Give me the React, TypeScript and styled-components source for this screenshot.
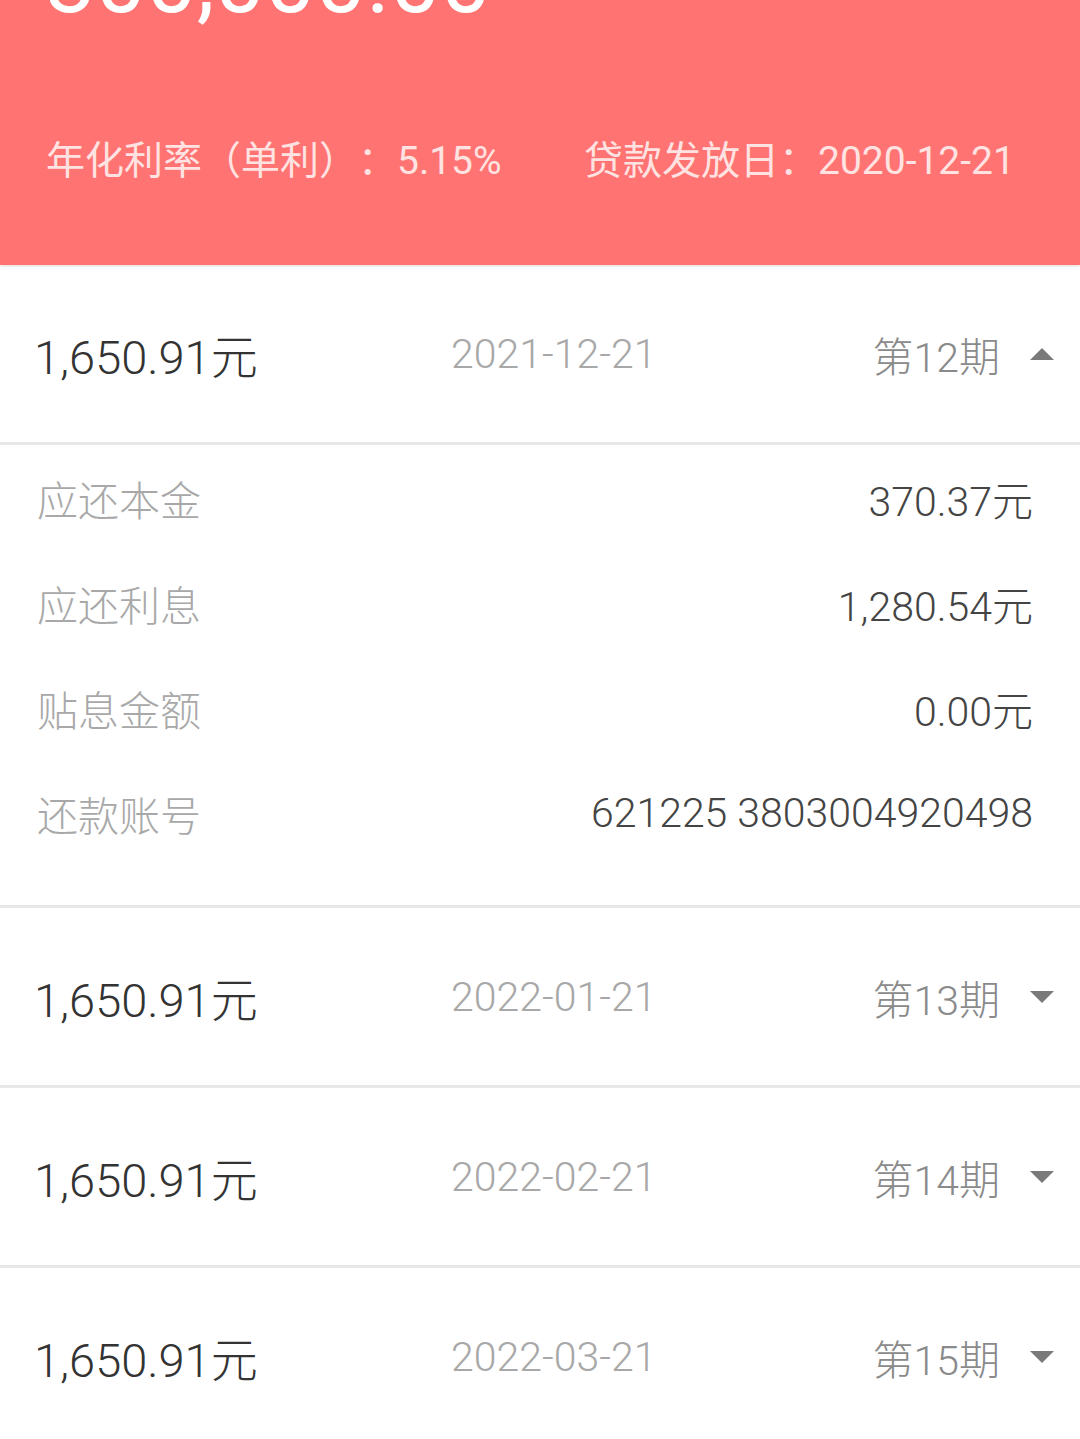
import styled, { createGlobalStyle } from "styled-components";

const GlobalStyle = createGlobalStyle`
  html, body {
    margin: 0;
    padding: 0;
    overflow: hidden;
    background: #ffffff;
  }
  body {
    font-family: Roboto, "Noto Sans CJK SC", sans-serif;
    -webkit-font-smoothing: antialiased;
    text-spacing-trim: space-all;
  }
`;

interface Installment {
  amount: string;
  date: string;
  period: number;
  open?: boolean;
}

const installments: Installment[] = [
  { amount: "1,650.91元", date: "2021-12-21", period: 12, open: true },
  { amount: "1,650.91元", date: "2022-01-21", period: 13 },
  { amount: "1,650.91元", date: "2022-02-21", period: 14 },
  { amount: "1,650.91元", date: "2022-03-21", period: 15 },
];

const details = [
  { label: "应还本金", value: "370.37元" },
  { label: "应还利息", value: "1,280.54元" },
  { label: "贴息金额", value: "0.00元" },
  { label: "还款账号", value: "621225 3803004920498" },
];

const Caret = ({ up }: { up?: boolean }) => (
  <CaretIcon width="24" height="12" viewBox="0 0 24 12">
    {up ? (
      <polygon points="12,0 24,12 0,12" fill="#7a7a7a" />
    ) : (
      <polygon points="0,0 24,0 12,12" fill="#7a7a7a" />
    )}
  </CaretIcon>
);

const App = () => (
  <Page>
    <GlobalStyle />
    <Header>
      <BigAmount>300,000.00</BigAmount>
      <InfoRow>
        <InfoText>年化利率（单利）：5.15%</InfoText>
        <InfoText>贷款发放日：2020-12-21</InfoText>
      </InfoRow>
    </Header>
    <List>
      {installments.map((item) => (
        <Item key={item.period}>
          <Summary>
            <Amount>{item.amount}</Amount>
            <DueDate>{item.date}</DueDate>
            <Period>第{item.period}期</Period>
            <Caret up={item.open} />
          </Summary>
          {item.open && (
            <Details>
              {details.map((d) => (
                <DetailRow key={d.label}>
                  <DetailLabel>{d.label}</DetailLabel>
                  <DetailValue>{d.value}</DetailValue>
                </DetailRow>
              ))}
            </Details>
          )}
        </Item>
      ))}
    </List>
  </Page>
);

export default App;

const Page = styled.div`
  width: 1080px;
  height: 1439px;
  overflow: hidden;
  background: #ffffff;
`;

const Header = styled.header`
  display: flex;
  flex-direction: column;
  height: 265px;
  background: #ff7472;
  box-shadow: 0 1px 3px rgba(0, 0, 0, 0.15);
  position: relative;
  z-index: 1;
  overflow: hidden;
`;

const BigAmount = styled.div`
  margin-top: -63px;
  padding-left: 45px;
  font-size: 90px;
  line-height: 90px;
  color: #ffffff;
`;

const InfoRow = styled.div`
  display: grid;
  grid-template-columns: 538px 1fr;
  padding-left: 46px;
  margin-top: 112px;
`;

const InfoText = styled.span`
  font-size: 39px;
  line-height: 44px;
  color: #ffe3e2;
  white-space: nowrap;
`;

const List = styled.div`
  display: flex;
  flex-direction: column;
`;

const Item = styled.section`
  display: flex;
  flex-direction: column;
  border-bottom: 3px solid #e8e8e8;
`;

const Summary = styled.div`
  display: grid;
  grid-template-columns: 417px 1fr auto auto;
  align-items: center;
  height: 177px;
  padding: 0 26px 0 34px;
`;

const Amount = styled.span`
  font-size: 47px;
  font-weight: 300;
  color: #333333;
  white-space: nowrap;
`;

const DueDate = styled.span`
  font-size: 41px;
  font-weight: 300;
  color: #a8a8a8;
`;

const Period = styled.span`
  font-size: 41px;
  font-weight: 300;
  color: #8a8a8a;
`;

const CaretIcon = styled.svg`
  display: block;
  margin-left: 30px;
`;

const Details = styled.div`
  display: flex;
  flex-direction: column;
  border-top: 3px solid #e8e8e8;
  padding: 0 47px 40px 37px;
`;

const DetailRow = styled.div`
  display: flex;
  justify-content: space-between;
  align-items: center;
  height: 105px;
`;

const DetailLabel = styled.span`
  font-size: 41px;
  font-weight: 300;
  color: #a8a8a8;
`;

const DetailValue = styled.span`
  font-size: 41px;
  font-weight: 300;
  color: #444444;
`;
